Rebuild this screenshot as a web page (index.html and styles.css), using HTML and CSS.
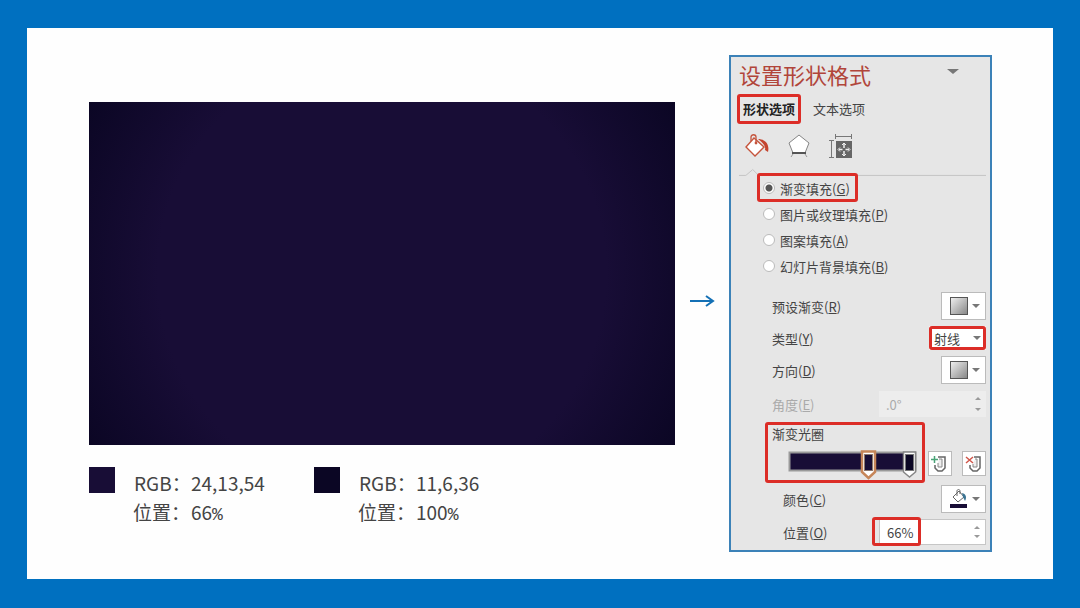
FILE: index.html
```
<!DOCTYPE html>
<html lang="zh-CN">
<head>
  <meta charset="utf-8">
  <title>设置形状格式</title>
  <link rel="stylesheet" href="styles.css">
</head>
<body>
  <main class="slide">
    <section class="sample">
      <div class="preview"></div>
      <div class="legend">
        <div class="legend-item">
          <span class="swatch swatch-inner"></span>
          <dl>
            <dt class="latin">RGB：</dt><dd>24,13,54</dd>
            <dt>位置：</dt><dd>66<span class="percent">%</span></dd>
          </dl>
        </div>
        <div class="legend-item">
          <span class="swatch swatch-outer"></span>
          <dl>
            <dt class="latin">RGB：</dt><dd>11,6,36</dd>
            <dt>位置：</dt><dd>100<span class="percent">%</span></dd>
          </dl>
        </div>
      </div>
    </section>

    <svg class="arrow" viewBox="0 0 26 14" fill="none" stroke="#1470b5" stroke-width="2">
      <path d="M1 7H24M17 2L24 7L17 12"/>
    </svg>

    <aside class="panel">
      <header class="panel-head">
        <h1>设置形状格式</h1>
        <span class="caret caret-big"></span>
      </header>

      <nav class="tabs">
        <button class="tab active mark">形状选项</button>
        <button class="tab">文本选项</button>
      </nav>

      <div class="tools">
        <button aria-label="填充">
          <svg viewBox="0 0 26 26" fill="none">
            <path d="M10 5L20 14L11 23L2 14Z" fill="#fff" stroke="#c5553d" stroke-width="1.4"/>
            <path d="M7 8V4C7 1 12 1 12 4V10" stroke="#c5553d" stroke-width="1.3"/>
            <circle cx="12" cy="10" r="1.4" fill="#c5553d"/>
            <path d="M14 6C20 6 26 10 24 19L21 17C22 13 19 10 14 6Z" fill="#c5442e"/>
          </svg>
        </button>
        <button aria-label="效果">
          <svg viewBox="0 0 26 26" fill="none">
            <path d="M13 2L23 10L19 20H7L3 10Z" fill="#fff" stroke="#858585"/>
            <path d="M6 20H20" stroke="#555" stroke-width="2"/>
            <path d="M7 21L5 24M19 21L21 24" stroke="#999"/>
          </svg>
        </button>
        <button aria-label="大小与属性">
          <svg viewBox="0 0 26 26" fill="none" stroke="#777">
            <path d="M7 3.5H24M7.500 1V6M23.500 1V6M3.500 8V24M1 7.500H6M1 24.500H6"/>
            <rect x="8" y="8" width="16" height="17" fill="#666" stroke="none"/>
            <path d="M16 11V22M11 16.500H21" stroke="#eee" stroke-width="1.500"/>
            <path d="M14 12L16 10L18 12M14 21L16 23L18 21M12 14.500L10 16.500L12 18.500M20 14.500L22 16.500L20 18.500" stroke="#eee"/>
            <rect x="14.500" y="15" width="3" height="3" fill="#666" stroke="none"/>
          </svg>
        </button>
      </div>

      <svg class="divider" viewBox="0 0 253 9" fill="none" stroke="#c4c4c4">
        <path d="M2 8.500H9L16 2.500L22 8.500H253"/>
      </svg>

      <div class="fills">
        <label class="mark"><input type="radio" name="fill" checked> 渐变填充(<u>G</u>)</label>
        <label><input type="radio" name="fill"> 图片或纹理填充(<u>P</u>)</label>
        <label><input type="radio" name="fill"> 图案填充(<u>A</u>)</label>
        <label><input type="radio" name="fill"> 幻灯片背景填充(<u>B</u>)</label>
      </div>

      <div class="fields">
        <div class="field">
          <label for="preset">预设渐变(<u>R</u>)</label>
          <button id="preset" class="picker"><span class="chip"></span><span class="caret"></span></button>
        </div>
        <div class="field field-type">
          <label for="type">类型(<u>Y</u>)</label>
          <span class="select mark">
            <select id="type"><option>射线</option></select>
            <span class="caret"></span>
          </span>
        </div>
        <div class="field">
          <label for="direction">方向(<u>D</u>)</label>
          <button id="direction" class="picker"><span class="chip"></span><span class="caret"></span></button>
        </div>
        <div class="field field-angle">
          <label for="angle">角度(<u>E</u>)</label>
          <span class="spinner">
            <input id="angle" value=".0°" disabled>
            <span class="steps"><i></i><i></i></span>
          </span>
        </div>

        <div class="stops">
          <div class="stops-box mark">
            <span>渐变光圈</span>
            <svg viewBox="0 0 132 32" fill="none">
              <rect x="2.500" y="3.500" width="126" height="18" fill="#180d36" stroke="#999" stroke-width="2"/>
              <path d="M75 2.500H88V23L81.500 29L75 23Z" fill="#fff" stroke="#c68558" stroke-width="2.500"/>
              <rect x="77.500" y="5.500" width="8" height="16" fill="#180d36" stroke="#8a766c"/>
              <path d="M116.500 3H128.500V23L122.500 28L116.500 23Z" fill="#fff" stroke="#858585" stroke-width="1.500"/>
              <rect x="118.500" y="5.500" width="8" height="16" fill="#0b0624" stroke="#777"/>
            </svg>
          </div>
          <button class="square" aria-label="添加渐变光圈">
            <svg viewBox="0 0 22 22" fill="none">
              <path d="M9 4H16V15L13 18H9L6 15V12" stroke="#666" stroke-width="1.500"/>
              <path d="M10 6H13V14H9V10" fill="#eee" stroke="#888"/>
              <path d="M2 6.500H9M5.500 3V10" stroke="#4aa377" stroke-width="1.500"/>
            </svg>
          </button>
          <button class="square" aria-label="删除渐变光圈">
            <svg viewBox="0 0 22 22" fill="none">
              <path d="M11 4H17V15L14 18H10L7 15V12" stroke="#666" stroke-width="1.500"/>
              <path d="M12 6H14V14H10V11" fill="#eee" stroke="#888"/>
              <path d="M3 4L10 10M10 4L3 10" stroke="#d0564a" stroke-width="1.500"/>
            </svg>
          </button>
        </div>

        <div class="field sub">
          <label for="color">颜色(<u>C</u>)</label>
          <button id="color" class="picker">
            <svg viewBox="0 0 18 20" fill="none">
              <path d="M9 2L14 8L8 13L3 8Z" fill="#fff" stroke="#666"/>
              <path d="M7 7V2C7 0 10 0 10 2V5" stroke="#666"/>
              <path d="M12 4C16 5 17 8 15 12L13 8Z" fill="#3c7594"/>
              <rect y="15" width="17" height="4" fill="#180d36"/>
            </svg>
            <span class="caret"></span>
          </button>
        </div>
        <div class="field sub">
          <label for="position">位置(<u>O</u>)</label>
          <span class="spinner spinner-on mark">
            <input id="position" value="66%">
            <span class="steps"><i></i><i></i></span>
          </span>
        </div>
      </div>
    </aside>
  </main>
</body>
</html>
```
FILE: styles.css
```
*, *::after {
  box-sizing: border-box;
}

body {
  margin: 0;
  font-family: "Noto Sans CJK SC", sans-serif;
  color: #444;
}

button, input, select {
  font: inherit;
  color: inherit;
  margin: 0;
  padding: 0;
  border: none;
  background: none;
}

.slide {
  min-height: 100vh;
  display: flex;
  align-items: flex-start;
  padding: 27px 61px 26px 62px;
  border: 28px solid #0070c0;
  border-width: 28px 27px 29px;
  background: #fefefe;
}

/* left side */
.sample {
  flex: 1;
  padding-top: 47px;
}

.preview {
  aspect-ratio: 586 / 343;
  background: radial-gradient(circle farthest-corner, #180d36 66%, #0b0624);
}

.legend {
  display: flex;
  margin-top: 22px;
}

.legend-item {
  display: flex;
  width: 225px;
  gap: 18px;
}

.swatch {
  width: 26px;
  height: 26px;
}

.swatch-inner {
  background: #180d36;
}

.swatch-outer {
  background: #0b0624;
}

dl {
  display: grid;
  grid-template-columns: 58px auto;
  align-content: start;
  margin: 1px 0 0;
  font-size: 19px;
  line-height: 29px;
}

dt {
  white-space: nowrap;
}

.latin {
  padding-left: 1px;
}

dd {
  margin: 0;
}

.percent {
  font-family: "Liberation Mono", monospace;
  font-size: 18px;
}

.arrow {
  flex: none;
  width: 26px;
  height: 14px;
  margin: 239px 14px 0;
}

/* format pane */
.panel {
  flex: 0 0 263px;
  padding: 6px 4px 4px 6px;
  border: 2px solid #3c82b8;
  background: #e6e6e6;
  font-size: 13px;
}

.panel-head {
  display: flex;
  justify-content: space-between;
  padding: 0 27px 0 2px;
}

h1 {
  margin: 0;
  font-size: 22px;
  font-weight: normal;
  line-height: 22px;
  color: #b1453a;
}

.caret {
  flex: none;
  border: 4px solid transparent;
  border-top: 4px solid #777;
  border-bottom: none;
}

.caret-big {
  margin-top: 6px;
  border-width: 5px 6px 0;
}

/* red highlight boxes */
.mark {
  position: relative;
}

.mark::after {
  content: "";
  position: absolute;
  inset: 0;
  border: 3px solid #dc2d27;
  border-radius: 3px;
  pointer-events: none;
}

.tabs {
  display: flex;
  gap: 12px;
  height: 30px;
  margin-top: 9px;
}

.tab {
  padding: 0 0 2px;
}

.tab.active {
  padding: 0 6px 2px;
  font-weight: bold;
  color: #222;
}

.tools {
  display: flex;
  gap: 16px;
  margin: 9px 0 8px 7px;
}

.tools button, .tools svg {
  display: block;
  width: 26px;
  height: 26px;
}

.divider {
  display: block;
  width: 100%;
  height: 9px;
}

.fills {
  display: flex;
  flex-direction: column;
  align-items: flex-start;
  gap: 2px;
  margin-left: 20px;
}

.fills label {
  display: flex;
  align-items: center;
  height: 24px;
  padding: 0 8px 0 6px;
}

.fills .mark::after {
  inset: -3px 0 -2px;
}

input[type="radio"] {
  appearance: none;
  width: 12px;
  height: 12px;
  margin-right: 5px;
  border: 1px solid #bbb;
  border-radius: 50%;
  background: #fff;
}

input[type="radio"]:checked {
  background: radial-gradient(circle, #555 3px, #fff 4px);
}

.fields {
  display: flex;
  flex-direction: column;
  gap: 5px;
  margin: 14px 0 0 28px;
}

.field {
  display: flex;
  align-items: center;
  justify-content: space-between;
  height: 28px;
  padding-left: 7px;
}

.field-type {
  height: 26px;
}

.field-angle {
  height: 30px;
  color: #aaa;
}

.sub {
  padding-left: 18px;
}

.picker {
  display: flex;
  align-items: center;
  justify-content: space-between;
  width: 45px;
  height: 28px;
  padding: 0 5px 0 8px;
  border: 1px solid #bbb;
  background: #fff;
}

.picker svg {
  width: 18px;
  height: 20px;
}

.chip {
  width: 18px;
  height: 18px;
  border: 1px solid #555;
  background: linear-gradient(135deg, #eee, #888);
}

.select {
  display: flex;
  align-items: center;
  width: 57px;
  height: 24px;
  padding: 0 5px;
  background: #fff;
}

select {
  appearance: none;
  flex: 1;
  min-width: 0;
}

.spinner {
  display: flex;
  width: 107px;
  height: 26px;
  background: #ededed;
}

.spinner input {
  flex: 1;
  min-width: 0;
  padding-left: 7px;
}

.spinner-on {
  border: 1px solid #c6c6c6;
  background: #fff;
}

.spinner.mark::after {
  inset: -3px auto -2px -8px;
  width: 49px;
}

.steps {
  display: flex;
  flex-direction: column;
  justify-content: space-between;
  padding: 6px 5px;
}

.steps i {
  border: 3px solid transparent;
  border-top: none;
  border-bottom-color: #999;
}

.steps i:last-child {
  border-top: 3px solid #999;
  border-bottom: none;
}

.stops {
  display: flex;
  align-items: flex-end;
  height: 56px;
}

.stops-box {
  width: 160px;
  height: 56px;
  margin-right: 3px;
  padding-left: 7px;
  line-height: 20px;
}

.stops-box::after {
  inset: -2px 0 -3px;
}

.stops-box span {
  display: block;
}

.stops-box svg {
  display: block;
  width: 132px;
  height: 32px;
  margin: 5px 0 0 15px;
}

.square {
  width: 24px;
  height: 25px;
  margin-bottom: 4px;
  border: 1px solid #bbb;
  background: #fff;
}

.square svg {
  display: block;
  width: 22px;
  height: 22px;
}

.square + .square {
  margin-left: 10px;
}
```
